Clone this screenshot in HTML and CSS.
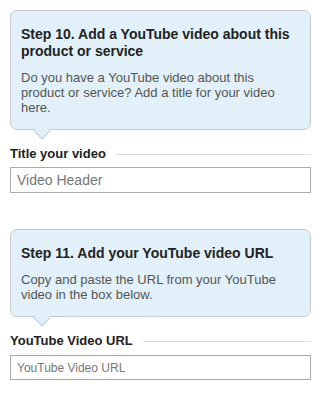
FILE: index.html
```html
<!DOCTYPE html>
<html lang="en">
<head>
    <meta charset="UTF-8">
    <meta name="viewport" content="width=device-width, initial-scale=1.0">
    <title>Video Steps</title>
    <link rel="stylesheet" href="styles.css">
</head>
<body>

    <section class="step">
        <div class="tip">
            <h2>Step 10. Add a YouTube video about this product or service</h2>
            <p>Do you have a YouTube video about this product or service? Add a title for your video here.</p>
        </div>
        <div class="field">
            <label class="field-label" for="video-title"><span>Title your video</span></label>
            <input type="text" id="video-title" class="field-input big" placeholder="Video Header">
        </div>
    </section>

    <section class="step">
        <div class="tip">
            <h2>Step 11. Add your YouTube video URL</h2>
            <p>Copy and paste the URL from your YouTube video in the box below.</p>
        </div>
        <div class="field">
            <label class="field-label" for="video-url"><span>YouTube Video URL</span></label>
            <input type="text" id="video-url" class="field-input" placeholder="YouTube Video URL">
        </div>
    </section>

</body>
</html>
```

FILE: styles.css
```css
body {
    font-family: 'Liberation Sans', Arial, sans-serif;
    margin: 0;
    padding: 10px 18px 0 10px;
    background-color: #fff;
    color: #222;
}

.step {
    margin-bottom: 36px;
}
.step:last-child {
    margin-bottom: 0;
}

.tip {
    position: relative;
    background: #e2f1f9;
    border: 1px solid #c3cbcf;
    border-radius: 7px;
    padding: 15px 12px 14px 10px;
}
.tip::after {
    content: '';
    position: absolute;
    left: 25px;
    bottom: -8px;
    width: 11px;
    height: 11px;
    background: #e2f1f9;
    border-right: 1px solid #c3cbcf;
    border-bottom: 1px solid #c3cbcf;
    transform: rotate(45deg);
}
.tip h2 {
    margin: 0;
    font-size: 14px;
    line-height: 17px;
    font-weight: bold;
    color: #222;
}
.tip p {
    margin: 10px 0 0;
    font-size: 13px;
    line-height: 15px;
    color: #555;
}

.field {
    margin-top: 16px;
}
.field-label {
    display: flex;
    align-items: center;
    gap: 10px;
    font-size: 13px;
    font-weight: bold;
    color: #222;
    line-height: 16px;
}
.field-label::after {
    content: '';
    flex: 1;
    height: 1px;
    background: #ddd;
}
.field-input {
    display: block;
    box-sizing: border-box;
    width: 100%;
    height: 25px;
    margin-top: 6px;
    padding: 0 6px;
    border: 1px solid #aaa;
    font-family: 'Liberation Sans', Arial, sans-serif;
    font-size: 12px;
    color: #333;
    background: #fff;
}
.field-input.big {
    height: 26px;
    margin-top: 5px;
    font-size: 14px;
}
.field-input::placeholder {
    color: #777;
}
```
